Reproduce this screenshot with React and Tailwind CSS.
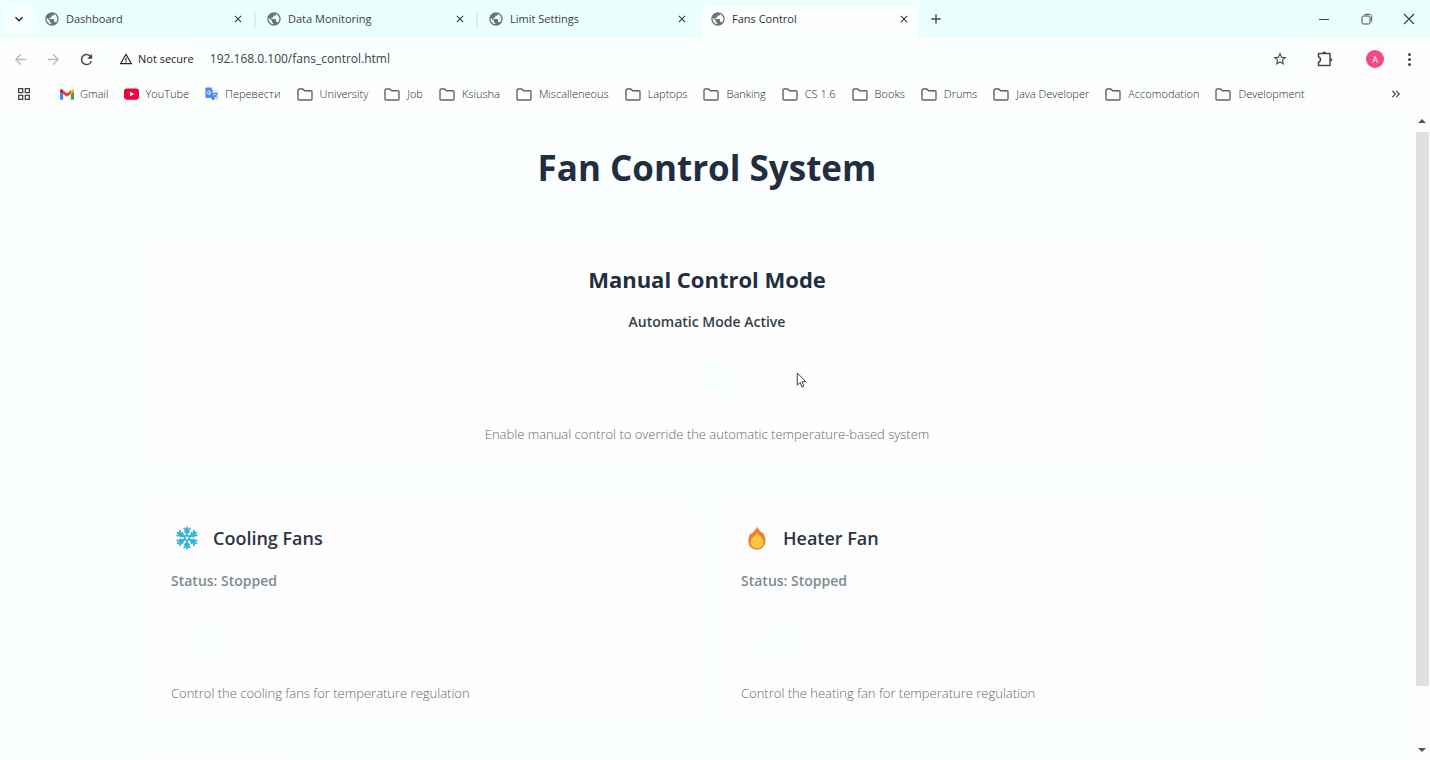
import { useState } from "react";
import {
  MdPublic,
  MdStarBorder,
  MdWarningAmber,
  MdOutlineGridView,
  MdArrowBack,
  MdArrowForward,
  MdRefresh,
  MdClose,
  MdAdd,
  MdKeyboardArrowDown,
  MdKeyboardDoubleArrowRight,
} from "react-icons/md";

const TABS = ["Dashboard", "Data Monitoring", "Limit Settings", "Fans Control"];

function Folder() {
  return (
    <svg viewBox="0 0 16 13" className="mr-px h-[13px] w-4" fill="none" stroke="#5f6368" strokeWidth="1.4" strokeLinejoin="round">
      <path d="M1 2.2C1 1.4 1.5 1 2.2 1h3.6l1.7 1.8h6.3c.8 0 1.2.5 1.2 1.2v6.8c0 .8-.4 1.2-1.2 1.2H2.2C1.5 12 1 11.600 1 10.800z" />
    </svg>
  );
}

function Gmail() {
  return (
    <svg viewBox="0 0 16 12" className="h-[11px] w-[14px]">
      <path d="M0 2v8.500C0 11.300.6 12 1.400 12H3.600V5z" fill="#4285f4" />
      <path d="M12.400 5v7h2.200c.8 0 1.400-.7 1.400-1.500V2z" fill="#34a853" />
      <path d="M12.400 1.200V5.400L16 2.700V1.600C16 .1 14.300-.5 13.200.4z" fill="#fbbc04" />
      <path d="M3.600 5.400V1.200L8 4.500l4.400-3.300v4.200L8 8.700z" fill="#ea4335" />
      <path d="M0 1.600v1.100l3.600 2.700V1.200L2.800.4C1.700-.5 0 .1 0 1.600z" fill="#c5221f" />
    </svg>
  );
}

function YouTube() {
  return (
    <svg viewBox="0 0 16 12" className="h-3 w-[15px]">
      <rect width="16" height="12" rx="3" fill="#f0033a" />
      <path d="M6.300 3.400v5.200L10.800 6z" fill="#fff" />
    </svg>
  );
}

function Translate() {
  return (
    <svg viewBox="0 0 16 16" className="size-[14px]">
      <path d="M7 4h7.500c.6 0 1 .4 1 1v9.500c0 .6-.4 1-1 1H10z" fill="#dbe3ea" />
      <path d="M1.500.5h6L11 12.500H1.500c-.6 0-1-.4-1-1v-10c0-.6.4-1 1-1z" fill="#4a8af4" />
      <path d="M7.500 12.500H11l-2 3z" fill="#2a56c6" />
      <path d="M7.200 6.400H5v1h1.100C5.900 8 5.400 8.400 4.800 8.400a1.900 1.900 0 1 1 1.200-3.300" fill="none" stroke="#fff" strokeWidth="1" />
      <path d="M9.800 7.500h4.600M12 6.500v1M13.500 7.500c-.4 1.800-1.500 3.200-2.800 4M10.800 9c.6 1.300 1.700 2.400 2.900 3" fill="none" stroke="#4a7fd0" strokeWidth="1.200" />
    </svg>
  );
}

function Puzzle() {
  return (
    <svg viewBox="0 0 18 18" className="size-[18px]" fill="none" stroke="#474747" strokeWidth="1.500" strokeLinejoin="round">
      <path d="M2.500 3.500h11.500v12H2.500v-3.400c1.300-.2 2-1.200 2-2.500S3.800 7.300 2.500 7.100z" />
      <path d="M6.500 3.200a1.800 1.800 0 0 1 3.600 0zM14.500 8a1.800 1.800 0 0 1 0 3.600z" fill="#474747" stroke="none" />
    </svg>
  );
}

function Snowflake() {
  return (
    <svg viewBox="0 0 24 24" className="size-6" fill="none" stroke="#35b5dc" strokeWidth="1.800" strokeLinecap="round">
      {[0, 60, 120, 180, 240, 300].map((a) => (
        <g key={a} transform={`rotate(${a} 12 12)`}>
          <path d="M12 9.200V1.300M9.200 2.300L12 5l2.800-2.700M9.800 5.400L12 7.600l2.200-2.200M12 9.200l2.400 1.400" />
        </g>
      ))}
    </svg>
  );
}

function Flame() {
  return (
    <svg viewBox="0 0 24 24" className="size-6">
      <path d="M12.300.5c.4 2.400 2.800 4 4.600 6.500.3-.5.300-1 .2-1.500 2.100 2.900 3.400 6 3.400 9.300 0 5-3.500 8.700-8.500 8.700s-8.700-3.600-8.700-8.600c0-3.300 1.300-5.800 2.400-8.200.3.700.5 1.100.9 1.500C8 5.300 11 3.800 12.300.5z" fill="#ee7f38" />
      <path d="M12.100 6.800c1 2.800 6.400 5 6.400 9.500 0 3.600-2.900 6-6.400 6s-6.500-2.400-6.500-6c0-4.500 5.500-6.700 6.500-9.500z" fill="#ffc83a" />
    </svg>
  );
}

const BOOKMARKS = [
  ["Gmail", Gmail],
  ["YouTube", YouTube],
  ["Перевести", Translate],
  ["University", Folder],
  ["Job", Folder],
  ["Ksiusha", Folder],
  ["Miscalleneous", Folder],
  ["Laptops", Folder],
  ["Banking", Folder],
  ["CS 1.6", Folder],
  ["Books", Folder],
  ["Drums", Folder],
  ["Java Developer", Folder],
  ["Accomodation", Folder],
  ["Development", Folder],
];

function TabStrip() {
  return (
    <header className="flex h-[38px] shrink-0 items-end bg-[#ebffff] pl-1">
      <button aria-label="Search tabs" className="mb-1 flex size-[30px] items-center justify-center rounded-lg bg-[#f6ffff] text-[#222]">
        <MdKeyboardArrowDown className="size-4" />
      </button>
      <nav className="ml-[2px] flex min-w-0">
        {TABS.map((title, i) => {
          const active = i === 3;
          return (
            <div key={title} className="flex items-center">
              <div
                className={
                  active
                    ? "flex h-8 w-[216px] items-center rounded-t-lg bg-[#fdffff] px-2 text-[#2c3034]"
                    : "flex h-8 w-[216px] items-center px-2 text-[#3c4043]"
                }
              >
                <button className="flex min-w-0 flex-1 items-center gap-[6px] pb-[6px] text-left">
                  <MdPublic className="size-4 shrink-0 text-[#6b7278]" />
                  <span className="truncate text-[11px] leading-4">{title}</span>
                </button>
                <button aria-label={`Close ${title}`} className="mb-[6px] text-[#333]">
                  <MdClose className="size-3" />
                </button>
              </div>
              <span className={i < 2 ? "mx-[2px] mb-1 h-4 w-[2px] bg-[#cfeffa]" : "mx-[2px] h-4 w-[2px]"} />
            </div>
          );
        })}
      </nav>
      <button aria-label="New tab" className="mb-[11px] ml-1 text-[#444]">
        <MdAdd className="size-4" />
      </button>
      <div className="mb-[13px] ml-auto flex items-center gap-[30px] pr-[15px] text-[#444]">
        <button aria-label="Minimize" className="flex h-3 w-3 items-center">
          <span className="h-px w-[10px] bg-[#444]" />
        </button>
        <button aria-label="Restore">
          <svg viewBox="0 0 12 12" className="size-3" fill="none" stroke="currentColor">
            <rect x="1" y="3" width="8" height="8" rx="1.500" />
            <path d="M3.500 1.300h5c1.300 0 2.200.9 2.200 2.200v5" />
          </svg>
        </button>
        <button aria-label="Close window">
          <svg viewBox="0 0 12 12" className="size-3" fill="none" stroke="currentColor" strokeWidth="1.200">
            <path d="M1 1l10 10M11 1L1 11" />
          </svg>
        </button>
      </div>
    </header>
  );
}

function Toolbar() {
  return (
    <div className="flex h-[42px] shrink-0 items-center bg-[#fdffff] pr-[19px] pl-3">
      <div className="flex items-center gap-4 text-[#b9bcbe]">
        <button aria-label="Back"><MdArrowBack className="size-[17px]" /></button>
        <button aria-label="Forward"><MdArrowForward className="size-[17px]" /></button>
        <button aria-label="Reload" className="text-[#444]"><MdRefresh className="size-[17px]" /></button>
      </div>
      <div className="ml-3 flex h-[30px] min-w-0 flex-1 items-center rounded-full bg-[#f9ffff] pr-3 pl-1">
        <button className="flex items-center gap-[5px] rounded-full bg-[#fdffff] px-2 py-1 text-[11px] leading-4 font-medium text-[#222]">
          <MdWarningAmber className="size-[14px]" />
          Not secure
        </button>
        <input
          aria-label="Address"
          defaultValue="192.168.0.100/fans_control.html"
          className="ml-2 min-w-0 flex-1 bg-transparent text-[12px] leading-5 text-[#3c4043] outline-none"
        />
        <button aria-label="Bookmark this page" className="text-[#444]"><MdStarBorder className="size-4" /></button>
      </div>
      <div className="ml-4 flex items-center">
        <button aria-label="Extensions"><Puzzle /></button>
        <button aria-label="Profile" className="ml-8 flex size-[18px] items-center justify-center rounded-full bg-[#f54888] text-[9px] leading-none text-white">
          A
        </button>
        <button aria-label="Menu" className="ml-6 flex w-[3px] flex-col gap-[2px]">
          <span className="size-[3px] rounded-full bg-[#444]" />
          <span className="size-[3px] rounded-full bg-[#444]" />
          <span className="size-[3px] rounded-full bg-[#444]" />
        </button>
      </div>
    </div>
  );
}

function Bookmarks() {
  return (
    <nav className="flex h-7 shrink-0 items-center bg-[#fdffff] pr-[27px] pl-4">
      <button aria-label="All apps" className="text-[#474747]"><MdOutlineGridView className="size-4" /></button>
      <ul className="ml-7 flex min-w-0 flex-1 items-center gap-4 overflow-hidden">
        {BOOKMARKS.map(([name, Icon]) => (
          <li key={name} className="shrink-0">
            <a href="#" className="flex items-center gap-[6px] text-[11px] leading-4 font-light text-[#25282b]">
              <Icon />
              {name}
            </a>
          </li>
        ))}
      </ul>
      <button aria-label="More bookmarks" className="text-[#444]"><MdKeyboardDoubleArrowRight className="size-[14px]" /></button>
    </nav>
  );
}

function Toggle({ label }) {
  const [on, setOn] = useState(false);
  return (
    <label className="inline-flex cursor-pointer">
      <input type="checkbox" role="switch" aria-label={label} checked={on} onChange={() => setOn(!on)} className="peer sr-only" />
      <span className="flex h-8 w-14 items-center rounded-full bg-[#f8ffff] px-1 peer-checked:justify-end peer-checked:bg-[#35b5dc]">
        <span className="size-6 rounded-full bg-[#fefefe]" />
      </span>
    </label>
  );
}

function FanCard({ icon, title, hint }) {
  return (
    <section className="rounded-xl bg-[#fefefe] px-[22px] pt-6 pb-5">
      <h3 className="flex h-9 items-center gap-[14px] pl-1 text-[18px] leading-7 font-semibold text-[#2a3542]">
        {icon}
        {title}
      </h3>
      <p className="mt-[13px] text-[14px] leading-6 font-semibold text-[#7b8b92]">Status: Stopped</p>
      <div className="mt-7 h-8">
        <Toggle label={title} />
      </div>
      <p className="mt-7 text-[13px] leading-6 font-light text-[#5c6a71]">{hint}</p>
    </section>
  );
}

function ScrollBar() {
  return (
    <div className="flex w-4 shrink-0 flex-col items-center bg-[#fdfdfd] py-2" aria-hidden="true">
      <svg viewBox="0 0 8 4" className="h-1 w-2"><path d="M4 0l4 4H0z" fill="#555" /></svg>
      <div className="mt-[9px] flex w-[13px] flex-1 flex-col">
        <div className="basis-[90%] bg-[#e0e0e0]" />
      </div>
      <svg viewBox="0 0 8 4" className="h-1 w-2"><path d="M4 4l4-4H0z" fill="#555" /></svg>
    </div>
  );
}

export default function App() {
  return (
    <div className="relative flex h-screen flex-col overflow-hidden bg-[#fdffff] font-['Open_Sans','Noto_Sans',sans-serif]">
      <TabStrip />
      <Toolbar />
      <Bookmarks />
      <div className="mt-[3px] flex min-h-0 flex-1">
        <main className="min-w-0 flex-1 overflow-hidden bg-[#fbffff] px-6 pt-[29px]">
          <h1 className="text-center text-[35px] leading-[56px] font-bold text-[#222e3f]">Fan Control System</h1>
          <div className="mx-auto mt-[41px] max-w-[1116px]">
            <section className="flex flex-col items-center rounded-xl bg-[#fefefe] px-6 pt-6 pb-5">
              <h2 className="text-[22px] leading-9 font-bold text-[#222e3f]">Manual Control Mode</h2>
              <p className="mt-[13px] text-[14px] leading-6 font-semibold text-[#33404c]">Automatic Mode Active</p>
              <div className="mt-7 h-8">
                <Toggle label="Manual control" />
              </div>
              <p className="mt-7 text-[13px] leading-6 font-light text-[#5c6a71]">
                Enable manual control to override the automatic temperature-based system
              </p>
            </section>
            <div className="mt-[30px] grid grid-cols-2 gap-6">
              <FanCard icon={<Snowflake />} title="Cooling Fans" hint="Control the cooling fans for temperature regulation" />
              <FanCard icon={<Flame />} title="Heater Fan" hint="Control the heating fan for temperature regulation" />
            </div>
            <div className="mt-[30px] h-10 w-[137px] rounded-xl bg-[#fefefe]" />
          </div>
        </main>
        <ScrollBar />
      </div>
      <svg viewBox="0 0 12 18" className="pointer-events-none absolute top-[372px] left-[796px] h-[17px] w-3" fill="#fff" stroke="#333" strokeWidth="1">
        <path d="M1 1v13l3-3 2 5 2-1-2-4.700h4z" />
      </svg>
    </div>
  );
}
